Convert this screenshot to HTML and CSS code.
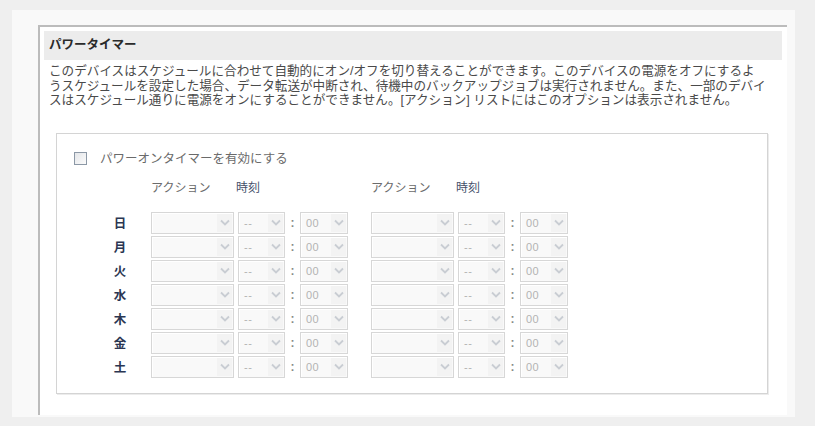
FILE: index.html
```html
<!DOCTYPE html>
<html lang="ja">
<head>
<meta charset="utf-8">
<link rel="stylesheet" href="styles.css">
</head>
<body>
<div class="panel">
  <div class="content">
    <div class="heading">パワータイマー</div>
    <div class="desc">
      <div class="line">このデバイスはスケジュールに合わせて自動的にオン/オフを切り替えることができます。このデバイスの電源をオフにするよ</div>
      <div class="line">うスケジュールを設定した場合、データ転送が中断され、待機中のバックアップジョブは実行されません。また、一部のデバイ</div>
      <div class="line">スはスケジュール通りに電源をオンにすることができません。[アクション] リストにはこのオプションは表示されません。</div>
    </div>
    <div class="box">
      <label class="check-row"><span class="checkbox"></span><span class="check-label">パワーオンタイマーを有効にする</span></label>
      <div class="row head-row">
        <span class="day"></span>
        <span class="h-action">アクション</span><span class="h-time">時刻</span>
        <span class="h-action">アクション</span><span class="h-time">時刻</span>
      </div>
      <div id="rows"></div>
    </div>
  </div>
</div>
<script src="app.js"></script>
</body>
</html>
```
FILE: app.js
```js
const days = ["日","月","火","水","木","金","土"];
const chev = '<svg width="10" height="7" viewBox="0 0 10 7"><path d="M1 1.5 L5 5.5 L9 1.5" fill="none" stroke="#c9cdd3" stroke-width="1.8"/></svg>';
function sel(cls, txt){
  return '<span class="sel ' + cls + '"><span class="sel-text">' + txt + '</span><span class="arrow">' + chev + '</span></span>';
}
function set(extra){
  return sel('action' + extra, '') + sel('hour', '--') + '<span class="colon">:</span>' + sel('minute', '00');
}
const rows = document.getElementById('rows');
rows.innerHTML = days.map(d =>
  '<div class="row"><span class="day">' + d + '</span>' + set('') + set(' second') + '</div>'
).join('');
```
FILE: styles.css
```css
html, body { margin: 0; padding: 0; }
body {
  background: #efefef;
  font-family: "Liberation Sans", "Noto Sans CJK JP", sans-serif;
  width: 815px;
  height: 426px;
  overflow: hidden;
}
.panel {
  margin: 10px 0 0 12px;
  width: 783px;
  height: 407px;
  background: #f9f9f9;
  box-sizing: border-box;
  padding: 15px 0 0 26px;
}
.content {
  width: 749px;
  height: 390px;
  background: #fff;
  border-left: 2px solid #bcbcbc;
  border-top: 2px solid #bcbcbc;
  box-sizing: border-box;
  padding: 4px 5px 0 4px;
}
.heading {
  background: #ececec;
  height: 29px;
  line-height: 28px;
  padding-left: 5px;
  font-size: 12.5px;
  font-weight: bold;
  color: #2a2a2a;
}
.desc {
  margin: 4px 0 0 5px;
  font-size: 12.6px;
  color: #4a4a4a;
  white-space: nowrap;
}
.line {
  height: 14.5px;
  line-height: 14.5px;
  overflow: visible;
}
.box {
  margin: 25px 0 0 12px;
  width: 712px;
  height: 261px;
  box-sizing: border-box;
  border: 1px solid #d4d4d4;
  box-shadow: 1px 1px 0 #ececec;
  padding: 18px 0 0 17px;
}
.check-row {
  display: flex;
  align-items: center;
  height: 14px;
}
.checkbox {
  width: 11px;
  height: 11px;
  border: 1px solid #8c98a6;
  background: linear-gradient(135deg, #e4e6e9, #fbfbfb);
}
.check-label {
  margin-left: 13px;
  font-size: 12.5px;
  color: #6a6a6a;
  line-height: 14px;
}
.row {
  display: flex;
  align-items: center;
  height: 22px;
  margin-bottom: 2px;
}
.head-row {
  margin-top: 13px;
  height: 16px;
  margin-bottom: 17px;
  font-size: 12px;
  color: #6b6b6b;
}
.day {
  width: 20px;
  margin-left: 36px;
  margin-right: 21px;
  text-align: center;
  font-size: 12.5px;
  font-weight: bold;
  color: #2b3652;
}
.h-action { width: 85px; }
.h-time { width: 135px; color: #46506a; }
.sel {
  display: flex;
  align-items: center;
  height: 22px;
  box-sizing: border-box;
  border: 1px solid #d7d7d7;
  background: #f9f9f9;
  box-shadow: inset 1px 1px 0 #fff;
  font-size: 11px;
  color: #b3b3b3;
}
.sel-text {
  flex: 1;
  padding-left: 5px;
  letter-spacing: 0.5px;
}
.arrow {
  width: 15px;
  height: 18px;
  margin-right: 1px;
  display: flex;
  align-items: center;
  justify-content: center;
  background: #f3f3f3;
}
.action { width: 83px; margin-right: 4px; }
.action.second { margin-left: 23px; }
.hour { width: 47px; }
.minute { width: 48px; }
.colon {
  width: 15px;
  text-align: center;
  font-size: 12px;
  font-weight: bold;
  color: #8a8a8a;
}
```
